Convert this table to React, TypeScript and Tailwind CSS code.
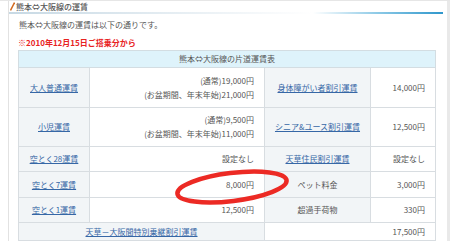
import React from "react";

const cellLabel = "bg-[#f2f5f7] border border-[#d8dde1] text-center align-middle";
const cellValue = "bg-white border border-[#d8dde1] text-right align-middle pr-[10px]";
const link = "text-[#3667a6] underline underline-offset-[1px]";

type Row = {
  h: string;
  label: string;
  value: React.ReactNode;
  label2: string;
  label2Link: boolean;
  value2: string;
};

const rows: Row[] = [
  {
    h: "h-[40px]",
    label: "大人普通運賃",
    value: (
      <>
        <div>(通常)19,000円</div>
        <div>(お盆期間、年末年始)21,000円</div>
      </>
    ),
    label2: "身体障がい者割引運賃",
    label2Link: true,
    value2: "14,000円",
  },
  {
    h: "h-[39px]",
    label: "小児運賃",
    value: (
      <>
        <div>(通常)9,500円</div>
        <div>(お盆期間、年末年始)11,000円</div>
      </>
    ),
    label2: "シニア&ユース割引運賃",
    label2Link: true,
    value2: "12,500円",
  },
  { h: "h-[25px]", label: "空とく28運賃", value: "設定なし", label2: "天草住民割引運賃", label2Link: true, value2: "設定なし" },
  { h: "h-[26px]", label: "空とく7運賃", value: "8,000円", label2: "ペット料金", label2Link: false, value2: "3,000円" },
  { h: "h-[25px]", label: "空とく1運賃", value: "12,500円", label2: "超過手荷物", label2Link: false, value2: "330円" },
];

export default function App() {
  return (
    <div className="w-[450px] h-[241px] overflow-hidden bg-white border-t border-[#e6e6e6] pl-[8px] font-['Noto_Sans_CJK_JP','Noto_Sans',sans-serif] text-[#555] text-[8px] leading-[14px]">
      <div className="h-[240px] border-l border-[#e2e2e2] border-r-[3px] border-r-[#e9e9e9] relative">
        {/* Heading */}
        <div className="flex items-center h-[11px] gap-[1px]">
          <svg width="5" height="9" viewBox="0 0 5 9" className="ml-[1px]">
            <line x1="4.5" y1="0.5" x2="0.5" y2="8.5" stroke="#d2691e" strokeWidth="1.5" />
          </svg>
          <span className="text-[8px] leading-[10px] text-[#555] font-medium">熊本⇔大阪線の運賃</span>
        </div>
        <div className="h-[2px] mr-[4px] bg-[linear-gradient(to_right,#c7d9e4_0%,#ffffff_70%,#8cc9e6_85%,#2f97cc_100%)]" />

        <p className="mt-[6px] pl-[10px] leading-[10px]">熊本⇔大阪線の運賃は以下の通りです。</p>
        <p className="mt-[8px] pl-[9px] leading-[10px] text-[#e8231f] font-bold">※2010年12月15日ご搭乗分から</p>

        {/* Fare table */}
        <div className="relative ml-[9px] mt-[2px] w-[417px]">
          <table className="w-[417px] table-fixed border-collapse">
            <colgroup>
              <col className="w-[71px]" />
              <col className="w-[175px]" />
              <col className="w-[106px]" />
              <col className="w-[65px]" />
            </colgroup>
            <tbody>
              <tr className="h-[17px]">
                <td colSpan={4} className="bg-[#def3fb] border border-[#d3dde2] text-center">
                  熊本⇔大阪線の片道運賃表
                </td>
              </tr>
              {rows.map((r) => (
                <tr key={r.label} className={r.h}>
                  <td className={cellLabel}>
                    <a href="#" className={link}>{r.label}</a>
                  </td>
                  <td className={cellValue}>{r.value}</td>
                  <td className={cellLabel}>
                    {r.label2Link ? <a href="#" className={link}>{r.label2}</a> : r.label2}
                  </td>
                  <td className={cellValue}>{r.value2}</td>
                </tr>
              ))}
              <tr className="h-[18px]">
                <td colSpan={2} className={cellLabel}>
                  <a href="#" className={link}>天草－大阪間特別乗継割引運賃</a>
                </td>
                <td colSpan={2} className={cellValue}>17,500円</td>
              </tr>
            </tbody>
          </table>

          {/* Hand-drawn highlight */}
          <svg
            width="120"
            height="40"
            viewBox="0 0 120 40"
            className="absolute left-[154px] top-[117px] pointer-events-none"
          >
            <ellipse
              cx="60"
              cy="20"
              rx="55"
              ry="14"
              fill="none"
              stroke="#ec2a24"
              strokeWidth="4.5"
              transform="rotate(-7 60 20)"
            />
          </svg>
        </div>
      </div>
    </div>
  );
}
